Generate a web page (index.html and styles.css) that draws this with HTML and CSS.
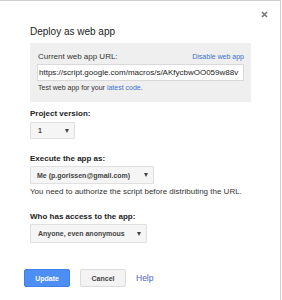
FILE: index.html
```html
<!DOCTYPE html>
<html lang="en">
<head>
  <meta charset="UTF-8" />
  <title>Deploy as web app</title>
  <link rel="stylesheet" href="styles.css">
</head>
<body>
  <div class="dialog">
    <button class="close" type="button" aria-label="Close">
      <svg width="7" height="7" viewBox="0 0 7 7"><path d="M1 1L6 6M6 1L1 6" stroke="#777" stroke-width="1.6"/></svg>
    </button>

    <h1 class="title">Deploy as web app</h1>

    <!-- URL actual -->
    <div class="url-box">
      <div class="url-head">
        <span>Current web app URL:</span>
        <a href="#" class="link small">Disable web app</a>
      </div>
      <div class="url-input">https://script.google.com/macros/s/AKfycbwOO059w88v</div>
      <p class="small">Test web app for your <a href="#" class="link">latest code</a>.</p>
    </div>

    <div class="field">
      <label class="field-label">Project version:</label>
      <div class="select sel-version"><span>1</span><i class="arrow"></i></div>
    </div>

    <div class="field">
      <label class="field-label">Execute the app as:</label>
      <div class="select sel-exec"><span>Me (p.gorissen@gmail.com)</span><i class="arrow"></i></div>
      <p class="note">You need to authorize the script before distributing the URL.</p>
    </div>

    <div class="field">
      <label class="field-label">Who has access to the app:</label>
      <div class="select sel-access"><span>Anyone, even anonymous</span><i class="arrow"></i></div>
    </div>

    <div class="buttons">
      <button type="button" class="btn btn-primary">Update</button>
      <button type="button" class="btn">Cancel</button>
      <a href="#" class="help">Help</a>
    </div>
  </div>
</body>
</html>
```

FILE: styles.css
```css
* {
  box-sizing: border-box;
  margin: 0;
  padding: 0;
}

body {
  font-family: "Liberation Sans", Arial, sans-serif;
  color: #222;
  background: #fff;
}

.dialog {
  position: relative;
  width: 281px;
  height: 300px;
  border-top: 1px solid #cfcfcf;
  border-right: 1px solid #cfcfcf;
  padding: 25px 0 0 30px;
}

.close {
  position: absolute;
  top: 10px;
  right: 12px;
  width: 7px;
  height: 7px;
  border: none;
  background: none;
  display: flex;
}

.title {
  font-size: 10px;
  font-weight: normal;
  line-height: 12px;
  color: #222;
}

.link {
  color: #3d6fd3;
  text-decoration: none;
}

.small {
  font-size: 7px;
  line-height: 10px;
}

.url-box {
  width: 221px;
  margin-top: 5px;
  background: #efefef;
  padding: 9px 7px 9px 7px;
}

.url-head {
  display: flex;
  justify-content: space-between;
  align-items: center;
  font-size: 8px;
  line-height: 10px;
  padding-left: 1px;
  color: #333;
}

.url-input {
  margin-top: 2px;
  height: 17px;
  background: #fff;
  border: 1px solid #d9d9d9;
  font-size: 8px;
  line-height: 15px;
  padding-left: 1px;
  white-space: nowrap;
  overflow: hidden;
  color: #222;
}

.url-box p {
  margin-top: 2px;
  padding-left: 1px;
  color: #333;
}

.field {
  margin-top: 7px;
}

.field + .field {
  margin-top: 15px;
}

.field:last-of-type {
  margin-top: 13px;
}

.field-label {
  display: block;
  font-size: 8px;
  font-weight: bold;
  line-height: 10px;
  color: #222;
}

.select {
  display: flex;
  justify-content: space-between;
  align-items: center;
  margin-top: 2px;
  height: 18px;
  background: #f5f5f5;
  border: 1px solid #e0e0e0;
  border-radius: 1px;
  padding: 0 5px 0 7px;
  font-size: 7px;
  font-weight: bold;
  color: #444;
}

.sel-version {
  width: 45px;
  margin-top: 3px;
  height: 17px;
}

.sel-exec {
  width: 124px;
  padding-left: 6px;
}

.sel-access {
  width: 117px;
  height: 19px;
}

.arrow {
  width: 0;
  height: 0;
  border-left: 2px solid transparent;
  border-right: 2px solid transparent;
  border-top: 4px solid #444;
}

.note {
  margin-top: 3px;
  font-size: 8px;
  line-height: 10px;
  color: #333;
}

.buttons {
  display: flex;
  align-items: center;
  gap: 10px;
  margin: 26px 0 0 -6px;
}

.btn {
  width: 46px;
  height: 18px;
  border: 1px solid #dcdcdc;
  border-radius: 2px;
  background: #f3f3f3;
  font-family: inherit;
  font-size: 7px;
  font-weight: bold;
  color: #444;
}

.btn-primary {
  background: #4d8ef5;
  border-color: #3f7fe6;
  color: #fff;
}

.help {
  font-size: 8.5px;
  color: #4a62d0;
  text-decoration: none;
}
```
